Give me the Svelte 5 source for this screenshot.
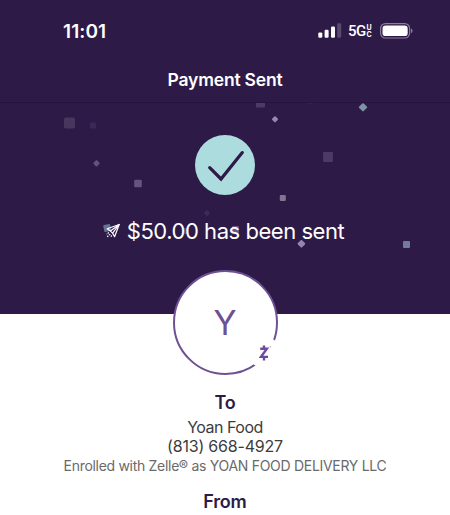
<script>
  const amount = "$50.00";
  const recipient = {
    initial: "Y",
    name: "Yoan Food",
    phone: "(813) 668-4927",
    enrolled: "YOAN FOOD DELIVERY LLC",
  };

  // x and y are centers, turn is in degrees
  const confetti = [
    { x: 69.5, y: 20, size: 11, turn: 0, color: "#49365f" },
    { x: 93, y: 22.5, size: 6, turn: 0, color: "#3e2758" },
    { x: 96.5, y: 60.3, size: 5, turn: 45, color: "#65517e" },
    { x: 138, y: 80.5, size: 7.6, turn: 0, color: "#67537f" },
    { x: 207, y: 110, size: 4.6, turn: 45, color: "#3d295b" },
    { x: 107.2, y: 125, size: 7, turn: -12, color: "#637391" },
    { x: 186, y: 128, size: 6, turn: 0, color: "#58436f" },
    { x: 235.5, y: 126.5, size: 7, turn: 0, color: "#6d5883" },
    { x: 260.5, y: 0, size: 9, turn: 0, color: "#4d3a66" },
    { x: 310, y: -2, size: 6, turn: 0, color: "#36214f" },
    { x: 363, y: 4.3, size: 6.4, turn: 45, color: "#7d91a7" },
    { x: 275, y: 16.2, size: 4.8, turn: 45, color: "#9a87ae" },
    { x: 328, y: 54, size: 9.8, turn: 0, color: "#4e3a66" },
    { x: 282.8, y: 95, size: 6, turn: 0, color: "#857490" },
    { x: 301.4, y: 140.8, size: 6, turn: 45, color: "#9885ae" },
    { x: 406.5, y: 141.5, size: 7, turn: 0, color: "#727b9a" },
  ];
</script>

<div class="screen">
  <div class="status">
    <span class="time">11:01</span>
    <div class="indicators">
      <svg class="signal" width="24" height="16" viewBox="0 0 24 16">
        <rect x="0.3" y="9.4" width="4" height="5.4" rx="1.2" />
        <rect x="6.6" y="6.8" width="4" height="8" rx="1.2" />
        <rect x="13" y="3.6" width="4" height="11.2" rx="1.2" />
        <rect class="off" x="19.2" y="0.2" width="4" height="14.6" rx="1.2" />
      </svg>
      <span class="network">5G</span>
      <span class="carrier"><i>U</i><i>C</i></span>
      <svg class="battery" width="33" height="16" viewBox="0 0 33 16">
        <rect class="shell" x="0.6" y="0.6" width="29" height="14.4" rx="4.8" />
        <rect x="2.5" y="2.5" width="25.2" height="10.6" rx="3.2" />
        <path class="tip" d="M31 5.5c2 .8 2 3.8 0 4.6z" />
      </svg>
    </div>
  </div>

  <header><h1>Payment Sent</h1></header>

  <section class="hero">
    <svg class="confetti" width="450" height="211" viewBox="0 0 450 211">
      {#each confetti as c}
        <rect
          x={c.x - c.size / 2}
          y={c.y - c.size / 2}
          width={c.size}
          height={c.size}
          rx={c.size > 10 ? 2 : 1}
          fill={c.color}
          transform={`rotate(${c.turn} ${c.x} ${c.y})`}
        />
      {/each}
    </svg>

    <svg class="check" width="60" height="60" viewBox="0 0 60 60">
      <circle cx="30" cy="30" r="30" />
      <path d="M14.7 32.6 26 44 47.3 17.6" />
    </svg>

    <p class="message">
      <svg class="plane" width="16" height="15" viewBox="1.8 0.5 16 15">
        <path d="M15 1 3 5.2 6.2 7.6 8.4 9.6 10.4 13.2z" />
        <path d="M6.2 7.6 15 1 8.4 9.6" />
        <path class="trail" d="M4.6 9 2.4 10.8M6 10.6 2.6 13.6M7.6 12 6.2 13.7" />
      </svg>
      <span>{amount} has been sent</span>
    </p>
  </section>

  <section class="details">
    <div class="avatar">
      <span>{recipient.initial}</span>
      <div class="badge">
        <svg width="16" height="18" viewBox="0 0 16 18">
          <path d="M3.2 4.8H9.9L4 12.9H11" />
          <path class="stem" d="M7 1.4V4.5M7 13V16.4" />
          <circle cx="13.4" cy="2.7" r="0.8" />
        </svg>
      </div>
    </div>

    <h2>To</h2>
    <p class="name">{recipient.name}</p>
    <p class="phone">{recipient.phone}</p>
    <p class="enrolled">Enrolled with Zelle® as {recipient.enrolled}</p>
    <h2 class="from">From</h2>
  </section>
</div>

<style>
  :global(body) {
    margin: 0;
    background: #fff;
  }
  .screen {
    width: 450px;
    height: 515px;
    overflow: hidden;
    font-family: Inter, "Liberation Sans", sans-serif;
    background: #fff;
  }
  h1,
  h2,
  p {
    margin: 0;
    white-space: nowrap;
  }
  .status {
    display: flex;
    justify-content: space-between;
    align-items: center;
    box-sizing: border-box;
    height: 62px;
    padding: 0 37px 0 63px;
    background: #2e1a47;
    color: #fff;
  }
  .time {
    font-size: 19px;
    font-weight: 600;
    letter-spacing: 0.1px;
  }
  .indicators {
    display: flex;
    align-items: center;
    fill: #fff;
  }
  .signal {
    margin-top: -1px;
  }
  .off {
    fill: #5b4a70;
  }
  .network {
    width: 18.5px;
    margin-left: 6px;
    font-family: Roboto, sans-serif;
    font-size: 15px;
    font-weight: 500;
    letter-spacing: -0.5px;
  }
  .carrier {
    display: flex;
    flex-direction: column;
    width: 6px;
    margin-right: 7.5px;
    font-size: 7px;
    font-weight: 700;
    line-height: 7px;
  }
  .carrier i {
    font-style: normal;
  }
  .battery {
    margin-top: -1px;
  }
  .shell {
    fill: none;
    stroke: #8b7f9a;
    stroke-width: 1.2;
  }
  .tip {
    fill: #8b7f9a;
  }
  header {
    display: flex;
    justify-content: center;
    align-items: center;
    box-sizing: border-box;
    height: 41px;
    padding-bottom: 5px;
    border-bottom: 1px solid #25143b;
    background: #2e1a47;
  }
  h1 {
    color: #fff;
    font-size: 17.5px;
    font-weight: 600;
    letter-spacing: -0.2px;
  }
  .hero {
    position: relative;
    display: flex;
    flex-direction: column;
    align-items: center;
    box-sizing: border-box;
    height: 211px;
    padding-top: 32px;
    background: #2e1a47;
  }
  .confetti {
    position: absolute;
    top: 0;
    left: 0;
  }
  .check {
    position: relative;
  }
  .check circle {
    fill: #addcdf;
  }
  .check path {
    fill: none;
    stroke: #2e1a47;
    stroke-width: 3.2;
    stroke-linecap: round;
  }
  .message {
    position: relative;
    display: flex;
    align-items: center;
    gap: 5px;
    margin-top: 21px;
    color: #fff;
    font-size: 22px;
    line-height: 30px;
    letter-spacing: -0.46px;
  }
  .plane {
    fill: none;
    stroke: #fff;
    stroke-width: 1.2;
    stroke-linejoin: round;
    overflow: visible;
  }
  .trail {
    stroke-dasharray: 1.5 1;
  }
  .details {
    display: flex;
    flex-direction: column;
    align-items: center;
  }
  .avatar {
    position: relative;
    display: flex;
    justify-content: center;
    align-items: center;
    box-sizing: border-box;
    width: 105px;
    height: 105px;
    margin-top: -44.5px;
    border: 2px solid #6d5193;
    border-radius: 50%;
    background: #fff;
    color: #6d5193;
    font-size: 34px;
  }
  .badge {
    position: absolute;
    right: -5px;
    bottom: 4px;
    display: flex;
    justify-content: center;
    align-items: center;
    width: 32px;
    height: 32px;
    border-radius: 50%;
    background: #fff;
  }
  .badge path {
    fill: none;
    stroke: #6d4aa0;
    stroke-width: 2.4;
  }
  .badge circle {
    fill: #b8a9cc;
  }
  h2 {
    margin-top: 17px;
    color: #2e1a47;
    font-size: 18px;
    font-weight: 600;
    line-height: 22px;
    letter-spacing: -0.2px;
  }
  .name,
  .phone {
    color: #3c3c3c;
    font-size: 16px;
    line-height: 19px;
  }
  .name {
    margin-top: 4px;
    letter-spacing: -0.5px;
  }
  .phone {
    letter-spacing: -0.2px;
  }
  .enrolled {
    color: #6a6a6a;
    font-size: 14px;
    line-height: 19px;
    letter-spacing: -0.3px;
  }
  .from {
    margin-top: 16px;
  }
</style>
